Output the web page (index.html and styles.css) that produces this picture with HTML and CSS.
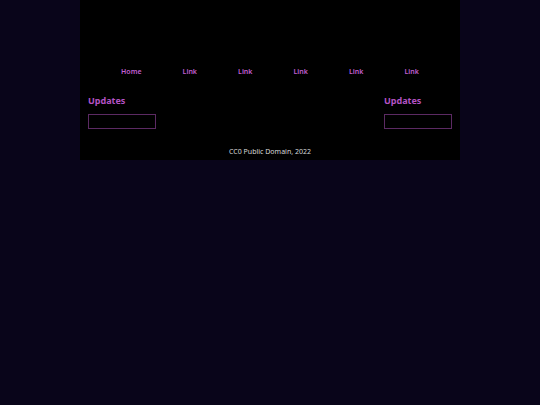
FILE: index.html
```html
<!DOCTYPE html>
<html>
<head>
<meta charset="utf-8">
<link rel="stylesheet" href="styles.css">
</head>
<body>
<div class="page">
  <header class="header"></header>
  <nav class="nav">
    <a href="#">Home</a>
    <a href="#">Link</a>
    <a href="#">Link</a>
    <a href="#">Link</a>
    <a href="#">Link</a>
    <a href="#">Link</a>
  </nav>
  <div class="main">
    <aside class="side">
      <h2 class="side-title">Updates</h2>
      <div class="box"></div>
    </aside>
    <section class="content"></section>
    <aside class="side">
      <h2 class="side-title">Updates</h2>
      <div class="box"></div>
    </aside>
  </div>
  <footer class="footer">CC0 Public Domain, 2022</footer>
</div>
</body>
</html>
```

FILE: styles.css
```css
html, body {
  margin: 0;
  padding: 0;
  background: #09051a;
}
body {
  font-family: "Noto Sans", "DejaVu Sans", sans-serif;
}
.page {
  width: 380px;
  margin: 0 auto;
  background: #000;
  height: 160px;
  display: flex;
  flex-direction: column;
}
.header {
  height: 66px;
}
.nav {
  display: flex;
  justify-content: space-evenly;
  height: 12px;
  align-items: center;
}
.nav a {
  color: #c25fd2;
  font-size: 7px;
  font-weight: 600;
  text-decoration: none;
  line-height: 12px;
}
.main {
  display: flex;
  justify-content: space-between;
  padding-top: 17px;
  height: 52px;
}
.side {
  width: 68px;
  padding: 0 8px;
}
.side-title {
  margin: 0;
  font-size: 9px;
  font-weight: 700;
  color: #b452c4;
  line-height: 12px;
}
.box {
  margin-top: 7px;
  height: 13px;
  border: 1px solid #5c2a63;
}
.footer {
  text-align: center;
  color: #d8d8d8;
  font-size: 7px;
  line-height: 10px;
}
```
